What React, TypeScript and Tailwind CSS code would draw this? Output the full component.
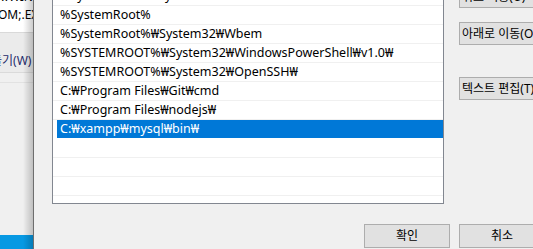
import React from 'react';

const paths = [
  '%SystemRoot%₩system32',
  '%SystemRoot%',
  '%SystemRoot%₩System32₩Wbem',
  '%SYSTEMROOT%₩System32₩WindowsPowerShell₩v1.0₩',
  '%SYSTEMROOT%₩System32₩OpenSSH₩',
  'C:₩Program Files₩Git₩cmd',
  'C:₩Program Files₩nodejs₩',
  'C:₩xampp₩mysql₩bin₩',
  '',
  '',
  '',
  '',
];

const SELECTED = 7;

function WinButton({ children, className = '' }: { children?: React.ReactNode; className?: string }) {
  return (
    <div className={`h-[23px] border border-[#adadad] bg-[#e1e1e1] flex items-center whitespace-nowrap overflow-hidden text-[12px] text-black ${className}`}>
      {children}
    </div>
  );
}

// the Environment Variables window peeking out behind the dialog
function BehindWindow() {
  return (
    <div className="relative w-[33px] shrink-0 flex flex-col overflow-hidden">
      <div className="h-[33px] bg-white border-b border-[#d9d9d9] flex flex-col">
        <div className="mt-[-11px] h-[15px] leading-[15px] whitespace-nowrap ml-[-6px]">S₩WINDOWS</div>
        <div className="mt-[3px] leading-[15px] whitespace-nowrap ml-[-2px]">OM;.EXE;.BAT;.CMD</div>
      </div>
      <div className="h-[40px] bg-[#ebebeb] border-b border-[#dadada] flex items-end pb-[4px]">
        <span className="whitespace-nowrap text-[#1f2c6b] leading-[15px] ml-[-9px]">들기(W)</span>
      </div>
      <div className="h-[10px] border-b border-[#e2e2e2]" />
      <div className="flex-1" />
      <div className="h-[14px] bg-[#0799e3]" />
      {/* drop shadow of the dialog */}
      <div className="absolute inset-y-0 right-0 w-[10px] bg-gradient-to-r from-black/0 to-black/20 pointer-events-none" />
    </div>
  );
}

export default function App() {
  return (
    <div
      className="w-[533px] h-[249px] overflow-hidden flex bg-[#f0f0f0] text-[12px] text-black"
      style={{ fontFamily: '"Noto Sans", "Noto Sans CJK KR", sans-serif' }}
    >
      <BehindWindow />

      <div className="flex-1 flex flex-col border-l border-[#6e6e6e] min-w-0">
        <div className="flex items-start mt-[-14px]">
          {/* path list */}
          <div className="ml-[18px] w-[392px] h-[218px] shrink-0 border border-[#828790] bg-white overflow-hidden text-[12.5px]">
            {paths.map((p, i) =>
              i === SELECTED ? (
                <div key={i} className="h-[19px] border-b border-white flex">
                  <div className="ml-[4px] flex-1 bg-[#0078d7] text-white pl-[3px] leading-[18px] whitespace-nowrap">{p}</div>
                </div>
              ) : (
                <div key={i} className="h-[19px] border-b border-[#f0f0f0] pl-[7px] leading-[18px] whitespace-nowrap">
                  {p}
                </div>
              )
            )}
          </div>

          {/* side buttons */}
          <div className="ml-[15px] flex flex-col">
            <WinButton className="w-[100px] mt-[-1px] pl-[2px] items-end">
              <span className="leading-[14px] mb-[3px]">위로 이동(U)</span>
            </WinButton>
            <WinButton className="w-[100px] mt-[14px] pl-[2px]">아래로 이동(O)</WinButton>
            <WinButton className="w-[100px] mt-[32px] pl-[2px]">텍스트 편집(T)</WinButton>
          </div>
        </div>

        <div className="flex mt-[20px] ml-[330px] gap-[9px]">
          <WinButton className="w-[86px] h-[24px] justify-center shrink-0">확인</WinButton>
          <WinButton className="w-[86px] h-[24px] justify-center shrink-0">취소</WinButton>
        </div>
      </div>
    </div>
  );
}
